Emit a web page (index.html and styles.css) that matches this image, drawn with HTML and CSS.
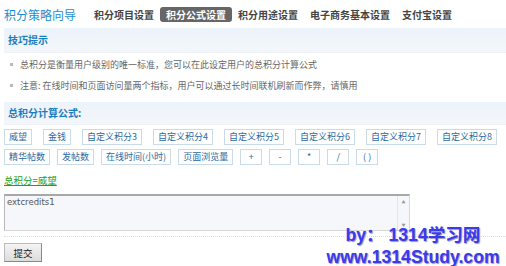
FILE: index.html
```html
<!DOCTYPE html>
<html lang="zh-CN">
<head>
  <meta charset="UTF-8" />
  <title>积分策略向导</title>
  <link rel="stylesheet" href="styles.css">
</head>
<body>

  <header class="topbar">
    <div class="title">积分策略向导</div>
    <nav class="tabs">
      <a href="#">积分项目设置</a>
      <a href="#" class="active">积分公式设置</a>
      <a href="#">积分用途设置</a>
      <a href="#">电子商务基本设置</a>
      <a href="#">支付宝设置</a>
    </nav>
  </header>

  <main>
    <!-- 技巧提示 -->
    <h3 class="band">技巧提示</h3>
    <ul class="tips">
      <li>总积分是衡量用户级别的唯一标准，您可以在此设定用户的总积分计算公式</li>
      <li>注意: 在线时间和页面访问量两个指标，用户可以通过长时间联机刷新而作弊，请慎用</li>
    </ul>

    <!-- 计算公式 -->
    <h3 class="band band-formula">总积分计算公式:</h3>
    <div class="keys">
      <span class="key">威望</span>
      <span class="key">金钱</span>
      <span class="key">自定义积分3</span>
      <span class="key">自定义积分4</span>
      <span class="key">自定义积分5</span>
      <span class="key">自定义积分6</span>
      <span class="key">自定义积分7</span>
      <span class="key">自定义积分8</span>
    </div>
    <div class="keys keys-tight">
      <span class="key">精华帖数</span>
      <span class="key">发帖数</span>
      <span class="key">在线时间(小时)</span>
      <span class="key">页面浏览量</span>
      <span class="key op">+</span>
      <span class="key op">-</span>
      <span class="key op">*</span>
      <span class="key op">/</span>
      <span class="key op">( )</span>
    </div>

    <a href="#" class="result">总积分=威望</a>

    <div class="editor">
      <textarea class="formula">extcredits1</textarea>
      <div class="scroll">
        <span>&#9650;</span>
        <span>&#9660;</span>
      </div>
    </div>

    <div class="divider"></div>

    <button class="submit">提交</button>
  </main>

  <div class="stamp">
    <div>by：&nbsp;1314学习网</div>
    <div>www.1314Study.com</div>
  </div>

</body>
</html>
```

FILE: styles.css
```css
body {
  margin: 0;
  background: #ffffff;
  color: #666666;
  font-family: "Noto Sans CJK SC", "Noto Sans", sans-serif;
  font-size: 9px;
  position: relative;
  height: 266px;
  overflow: hidden;
}

.topbar {
  display: flex;
  align-items: center;
  height: 28px;
  padding-left: 4px;
}
.topbar .title {
  font-size: 12px;
  color: #1a8fd0;
  margin-right: 12px;
}
.tabs {
  display: flex;
  align-items: center;
}
.tabs a {
  font-size: 10px;
  font-weight: bold;
  color: #444444;
  text-decoration: none;
  padding: 0 6px;
  line-height: 15px;
  border-radius: 3px;
}
.tabs a.active {
  background: #666666;
  color: #ffffff;
}

.band {
  margin: 0 0 0 4px;
  height: 24px;
  line-height: 24px;
  padding-left: 4px;
  background: linear-gradient(#ecf3fa, #f3f7fb);
  border-bottom: 1px solid #eef2f6;
  color: #1a7fc0;
  font-size: 10px;
  font-weight: bold;
}
.band-formula {
  margin-top: 6px;
  height: 22px;
  line-height: 22px;
}

.tips {
  list-style: none;
  margin: 0;
  padding: 1px 0 0 10px;
}
.tips li {
  line-height: 21px;
  padding-left: 10px;
  position: relative;
}
.tips li::before {
  content: "";
  position: absolute;
  left: 0;
  top: 9px;
  width: 3px;
  height: 3px;
  background: #b8b8b8;
}

.keys {
  display: flex;
  flex-wrap: wrap;
  gap: 11px;
  margin: 4px 0 0 4px;
}
.keys-tight {
  gap: 7px;
}
.key {
  display: inline-block;
  height: 14px;
  line-height: 14px;
  padding: 0 4px;
  border: 1px solid #c9dae8;
  background: #ffffff;
  color: #2a6aa0;
  font-size: 9px;
}
.key.op {
  min-width: 12px;
  text-align: center;
  padding: 0 4px;
}

.result {
  display: inline-block;
  margin: 8px 0 0 4px;
  line-height: 14px;
  color: #22a022;
  font-size: 9.5px;
}

.editor {
  display: flex;
  margin: 7px 0 0 4px;
  width: 406px;
  height: 37px;
  box-sizing: border-box;
  border: 1px solid #d8d8d8;
  border-top: 2px solid #a8a8a8;
  border-left: 1px solid #b8b8b8;
  background: #f5f7fa;
}
.formula {
  flex: 1;
  border: none;
  outline: none;
  resize: none;
  background: transparent;
  padding: 0 2px;
  font-family: "DejaVu Sans", sans-serif;
  font-size: 8.5px;
  color: #555555;
  line-height: 13px;
}
.scroll {
  width: 11px;
  display: flex;
  flex-direction: column;
  justify-content: space-between;
  align-items: center;
  border-left: 1px solid #e4e4e4;
  font-size: 4px;
  color: #999999;
  padding: 3px 0 2px;
}

.divider {
  margin: 5px 0 0 4px;
  border-top: 1px dotted #dddddd;
}

.submit {
  display: block;
  margin: 6px 0 0 4px;
  width: 38px;
  height: 19px;
  padding: 0;
  font-family: "Noto Sans CJK SC", sans-serif;
  font-size: 9.5px;
  color: #222222;
  background: linear-gradient(#f4f4f4, #dcdcdc);
  border: 1px solid #bbbbbb;
  border-right-color: #888888;
  border-bottom-color: #888888;
}

.stamp {
  position: absolute;
  left: 320px;
  top: 224px;
  width: 186px;
  text-align: center;
  font-family: "Liberation Sans", "Noto Sans CJK SC", sans-serif;
  font-weight: bold;
  font-size: 17.6px;
  line-height: 22px;
  color: #3a3af0;
  text-shadow: 1px 1px 1px #9a9ab0;
}
```
